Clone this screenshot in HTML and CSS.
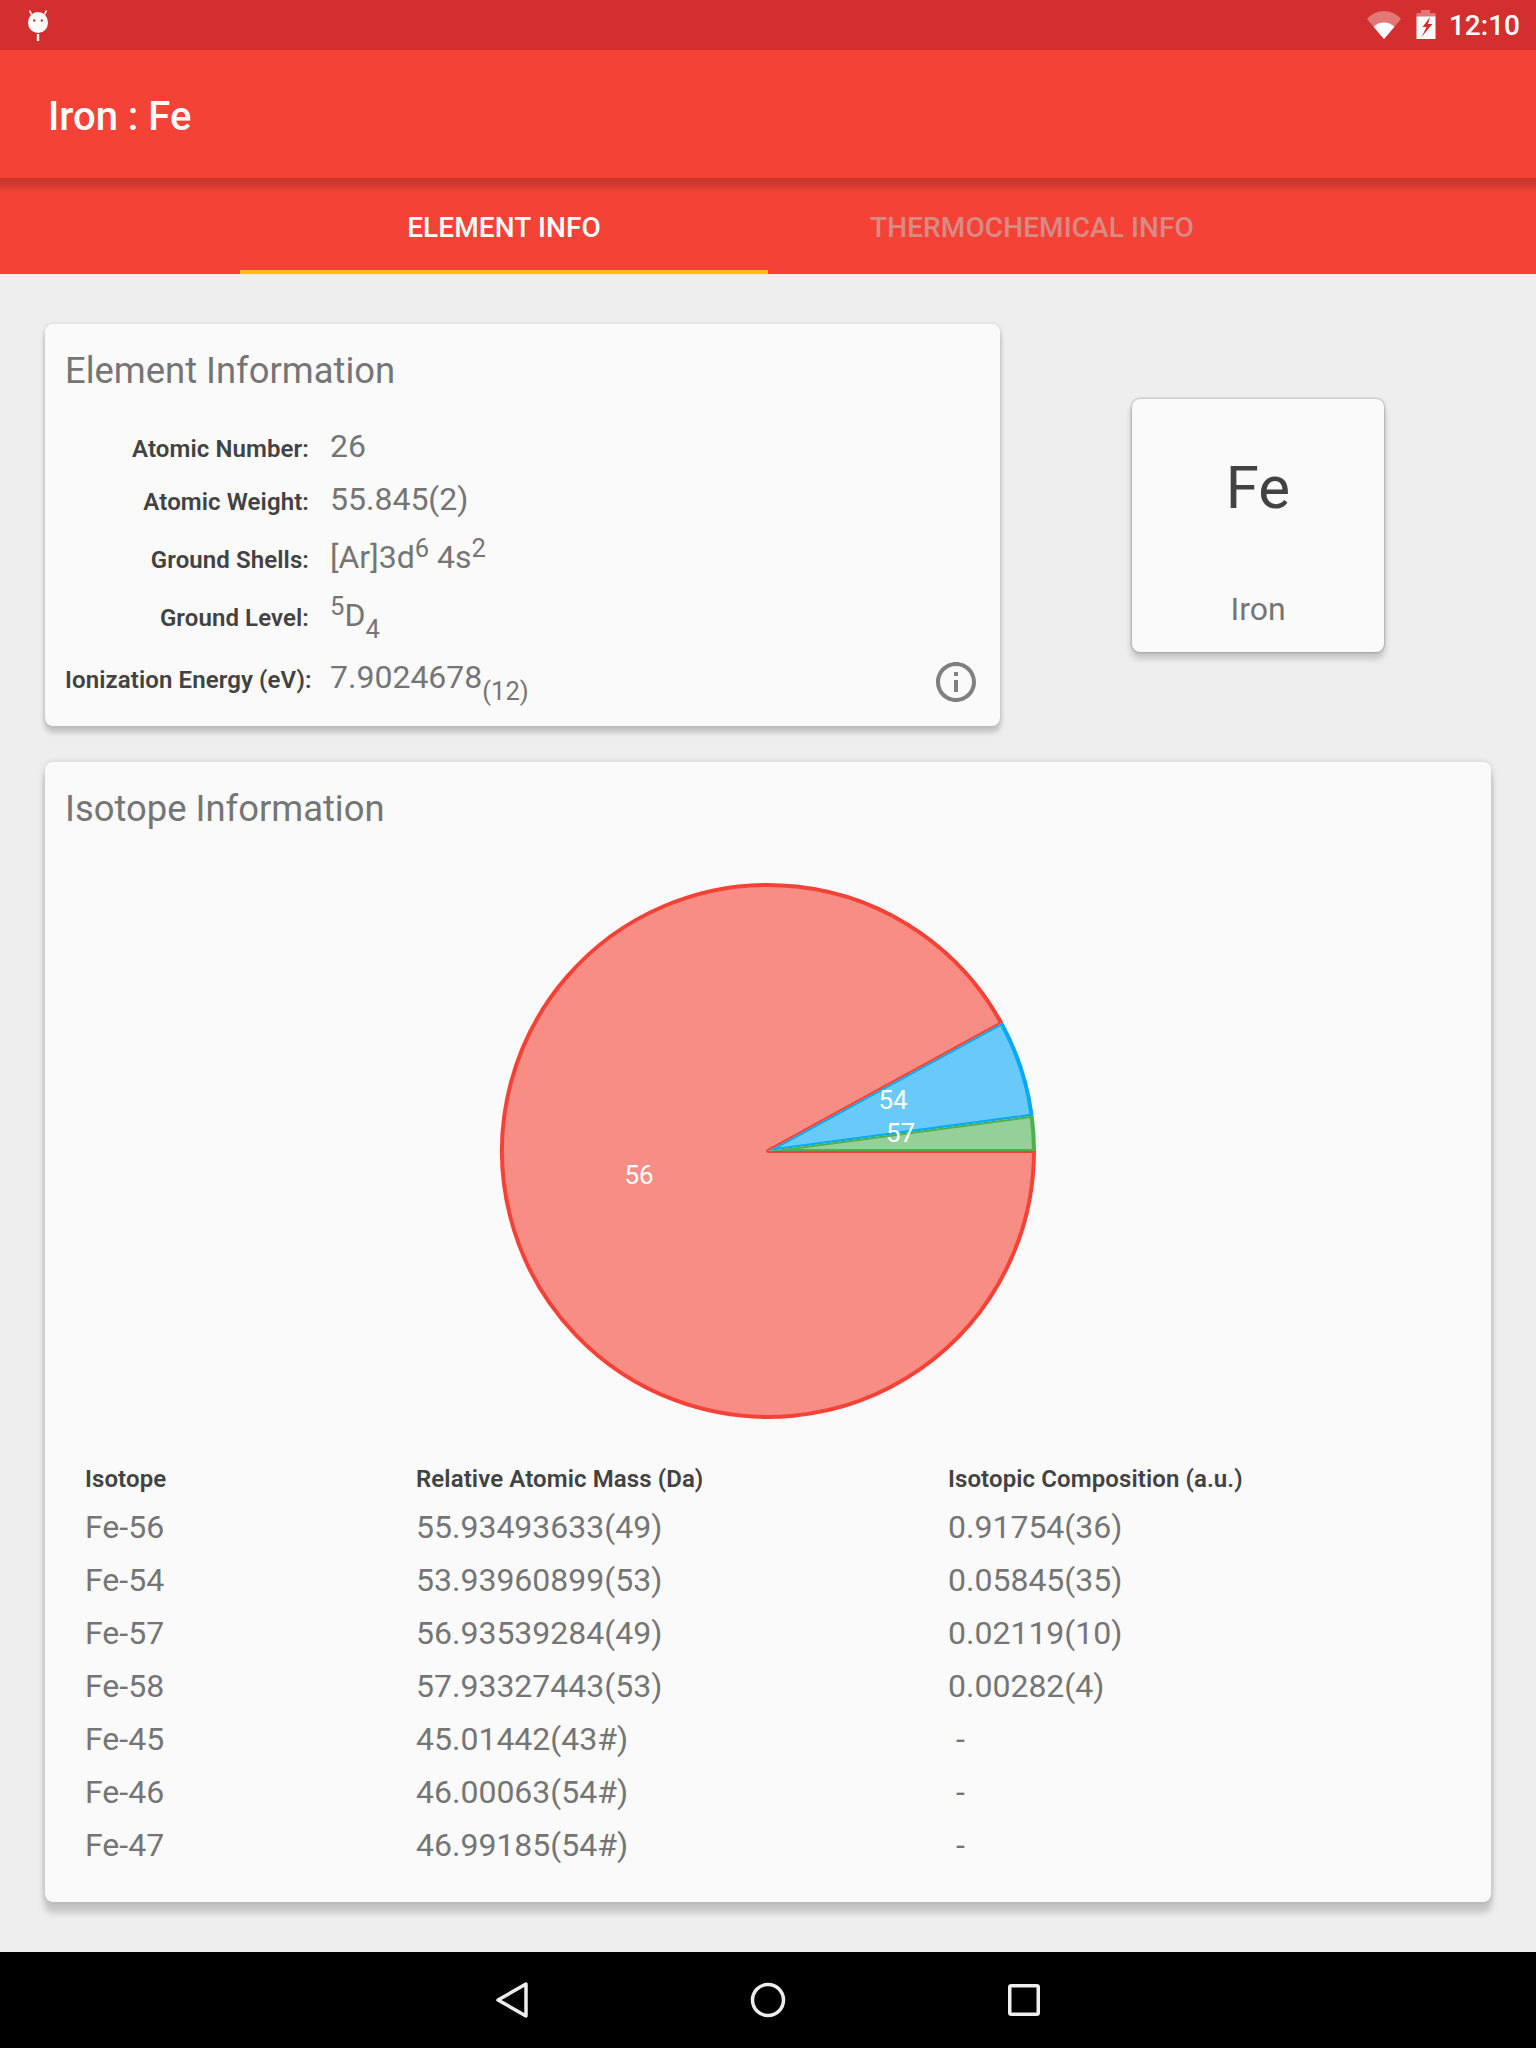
FILE: index.html
```html
<!DOCTYPE html>
<html lang="en">
<head>
<meta charset="utf-8">
<title>Iron : Fe</title>
<link rel="stylesheet" href="styles.css">
</head>
<body>
<div class="screen">
  <header class="status-bar">
    <svg class="debug-icon" width="20" height="31" viewBox="0 0 20 31">
      <ellipse cx="10" cy="12.5" rx="10" ry="10.5" fill="#fff"/>
      <path d="M3.5 4.5 1.5 .5M16.5 4.5 18.5 .5" stroke="#fff" stroke-width="1.6" fill="none"/>
      <circle cx="6.2" cy="10.5" r="1.2" fill="#d32f2f"/>
      <circle cx="13.8" cy="10.5" r="1.2" fill="#d32f2f"/>
      <rect x="8.8" y="24" width="2.4" height="7" fill="#fff"/>
    </svg>
    <div class="status-right">
      <svg width="34" height="28" viewBox="0 0 34 28">
        <path d="M17 28 0 8Q7 0 17 0T34 8Z" fill="#fff" fill-opacity=".35"/>
        <path d="M17 28 6.500 15.800Q11 11.500 17 11.500T27.500 15.800Z" fill="#fff"/>
      </svg>
      <svg width="20" height="29" viewBox="0 0 20 29">
        <path d="M5 0H14V3H19.500V7H.5V3H5Z" fill="#fff" fill-opacity=".35"/>
        <path d="M.5 6.500H19.500V29H.5Z" fill="#fff"/>
        <path d="M14 7 6.500 17H10.500L5.500 27 16.500 14H12Z" fill="#d32f2f"/>
      </svg>
      <span class="clock">12:10</span>
    </div>
  </header>

  <div class="toolbar"><h1 class="toolbar-title">Iron : Fe</h1></div>

  <nav class="tabs">
    <div class="tab tab-active">ELEMENT INFO</div>
    <div class="tab">THERMOCHEMICAL INFO</div>
  </nav>

  <main class="content">
    <div class="top-row">
      <section class="card info-card">
        <h2 class="card-title">Element Information</h2>
        <div class="info-rows">
          <div class="info-row"><span class="label">Atomic Number:</span><span class="value">26</span></div>
          <div class="info-row row-mid"><span class="label">Atomic Weight:</span><span class="value">55.845(2)</span></div>
          <div class="info-row row-mid"><span class="label">Ground Shells:</span><span class="value">[Ar]3d<sup>6</sup> 4s<sup>2</sup></span></div>
          <div class="info-row row-tall"><span class="label">Ground Level:</span><span class="value"><sup>5</sup>D<sub>4</sub></span></div>
          <div class="info-row"><span class="label">Ionization Energy (eV):</span><span class="value">7.9024678<sub>(12)</sub></span></div>
        </div>
        <svg class="info-icon" width="48" height="48" viewBox="0 0 24 24">
          <path fill="#808080" d="M11 7h2v2h-2zm0 4h2v6h-2zm1-9C6.480 2 2 6.480 2 12s4.480 10 10 10 10-4.480 10-10S17.520 2 12 2zm0 18c-4.410 0-8-3.590-8-8s3.590-8 8-8 8 3.590 8 8-3.590 8-8 8z"/>
        </svg>
      </section>
      <aside class="card element-tile">
        <div class="tile-symbol">Fe</div>
        <div class="tile-name">Iron</div>
      </aside>
    </div>

    <section class="card isotope-card">
      <h2 class="card-title">Isotope Information</h2>
      <svg class="pie" width="560" height="560" viewBox="0 0 560 560">
        <defs>
          <clipPath id="clip-blue"><polygon points="280,280 577.4,240.3 584,181 543.2,135.900"/></clipPath>
          <clipPath id="clip-green"><polygon points="280,280 600,280 577.4,240.3"/></clipPath>
          <clipPath id="clip-red"><polygon points="280,280 543.2,135.900 560,0 0,0 0,560 560,560 600,280"/></clipPath>
        </defs>
        <path clip-path="url(#clip-blue)" d="M280 280 543.660 244.820A266 266 0 0 0 513.330 152.250Z" fill="#69c9f9" stroke="#03a9f4" stroke-width="4" stroke-linejoin="round"/>
        <path clip-path="url(#clip-green)" d="M280 280H546A266 266 0 0 0 543.660 244.820Z" fill="#94d097" stroke="#4caf50" stroke-width="4" stroke-linejoin="round"/>
        <path clip-path="url(#clip-red)" d="M280 280 513.330 152.250A266 266 0 1 0 546 280Z" fill="#f78d84" stroke="#f44336" stroke-width="4" stroke-linejoin="round"/>
        <text class="pie-label" x="405" y="238" text-anchor="middle">54</text>
        <text class="pie-label" x="412.500" y="271" text-anchor="middle">57</text>
        <text class="pie-label" x="151" y="313" text-anchor="middle">56</text>
      </svg>
      <div class="isotope-table">
        <div class="th">Isotope</div><div class="th">Relative Atomic Mass (Da)</div><div class="th">Isotopic Composition (a.u.)</div>
        <div class="td">Fe-56</div><div class="td">55.93493633(49)</div><div class="td">0.91754(36)</div>
        <div class="td">Fe-54</div><div class="td">53.93960899(53)</div><div class="td">0.05845(35)</div>
        <div class="td">Fe-57</div><div class="td">56.93539284(49)</div><div class="td">0.02119(10)</div>
        <div class="td">Fe-58</div><div class="td">57.93327443(53)</div><div class="td">0.00282(4)</div>
        <div class="td">Fe-45</div><div class="td">45.01442(43#)</div><div class="td dash">-</div>
        <div class="td">Fe-46</div><div class="td">46.00063(54#)</div><div class="td dash">-</div>
        <div class="td">Fe-47</div><div class="td">46.99185(54#)</div><div class="td dash">-</div>
      </div>
    </section>
  </main>

  <footer class="nav-bar">
    <svg width="32" height="36" viewBox="0 0 32 36"><path d="M30 2V34L2 18Z" fill="none" stroke="#eee" stroke-width="3.500" stroke-linejoin="round"/></svg>
    <svg width="36" height="36" viewBox="0 0 36 36"><circle cx="18" cy="18" r="15.500" fill="none" stroke="#eee" stroke-width="3.500"/></svg>
    <svg width="32" height="32" viewBox="0 0 32 32"><rect x="1.750" y="1.750" width="28.500" height="28.500" rx="1.500" fill="none" stroke="#eee" stroke-width="3.500"/></svg>
  </footer>
</div>
</body>
</html>
```

FILE: styles.css
```css
* { box-sizing: border-box; }

html, body {
  margin: 0;
  padding: 0;
  background: #eee;
}

.screen {
  width: 1536px;
  height: 2048px;
  display: flex;
  flex-direction: column;
  overflow: hidden;
  font-family: Roboto, "Noto Sans", sans-serif;
}

.status-bar {
  height: 50px;
  flex: none;
  background: #d32f2f;
  display: flex;
  justify-content: space-between;
  align-items: flex-start;
  padding: 10px 16px 0 28px;
}

.status-right {
  display: flex;
  align-items: flex-start;
  gap: 15px;
  margin-top: 1px;
}

.status-right svg:nth-child(2) { margin-top: -1px; }

.clock {
  color: #fff;
  font-size: 28px;
  font-weight: 500;
  line-height: 33px;
  margin-top: -2px;
  margin-left: -2px;
}

.toolbar {
  height: 128px;
  flex: none;
  background: #f44336;
  display: flex;
  align-items: center;
  padding: 5px 0 0 48px;
  position: relative;
}

.toolbar::after {
  content: "";
  position: absolute;
  left: 0;
  right: 0;
  top: 100%;
  height: 14px;
  background: linear-gradient(to bottom, rgba(0,0,0,.2), rgba(0,0,0,.12) 55%, rgba(0,0,0,0));
  z-index: 2;
}

.toolbar-title {
  margin: 0;
  color: #fff;
  font-size: 40px;
  font-weight: 500;
  line-height: 47px;
}

.tabs {
  height: 96px;
  flex: none;
  background: #f44336;
  display: flex;
  padding: 0 240px;
}

.tab {
  flex: 1;
  display: flex;
  align-items: center;
  justify-content: center;
  font-size: 28px;
  font-weight: 500;
  letter-spacing: .1px;
  color: #da8a84;
  padding-top: 2px;
}

.tab-active {
  color: #fff;
  border-bottom: 4px solid #ffc107;
  padding-top: 6px;
}

.content {
  flex: 1;
  padding: 50px 45px 0;
  display: flex;
  flex-direction: column;
  gap: 36px;
}

.top-row {
  display: flex;
  align-items: center;
}

.card {
  background: #fafafa;
  border-radius: 8px;
  box-shadow: 0 6px 5px 1px rgba(0,0,0,.17), 0 0 4px rgba(0,0,0,.12);
}

.card-title {
  margin: 0;
  color: #757575;
  font-size: 36.400px;
  font-weight: 400;
  line-height: 42px;
  padding-top: 1px;
  height: 43px;
}

.info-card {
  width: 955px;
  height: 402px;
  flex: none;
  padding: 25px 20px 0;
  position: relative;
}

.info-rows { margin-top: 35px; }

.info-row {
  display: grid;
  grid-template-columns: 244px 1fr;
  column-gap: 21px;
  align-items: baseline;
  height: 53px;
}

.row-mid { height: 58px; }
.row-tall { height: 62px; }

.label {
  color: #424242;
  font-size: 24px;
  font-weight: 600;
  letter-spacing: .1px;
  line-height: 28px;
  text-align: right;
  white-space: nowrap;
}

.value {
  color: #757575;
  font-size: 32px;
  line-height: 38px;
  white-space: nowrap;
}

.value sup,
.value sub {
  font-size: 25.600px;
  line-height: 0;
}

.value sup { vertical-align: 11.500px; }
.value sub { vertical-align: -11.500px; }

.info-icon {
  position: absolute;
  right: 20px;
  bottom: 20px;
}

.element-tile {
  width: 252px;
  height: 253px;
  flex: none;
  margin-left: 132px;
  padding-top: 54px;
  display: flex;
  flex-direction: column;
  align-items: center;
  gap: 67px;
  box-shadow: 0 6px 6px 1px rgba(0,0,0,.17), 0 0 3px rgba(0,0,0,.4);
}

.tile-symbol {
  color: #424242;
  font-size: 60px;
  line-height: 70px;
}

.tile-name {
  color: #757575;
  font-size: 32px;
  line-height: 38px;
}

.isotope-card {
  height: 1140px;
  padding: 25px 20px 0;
  box-shadow: 0 10px 6px 1px rgba(0,0,0,.17), 0 0 6px rgba(0,0,0,.14);
}

.pie {
  display: block;
  margin: 41px auto 0;
}

.pie-label {
  fill: #fff;
  font-size: 26px;
}

.isotope-table {
  display: grid;
  grid-template-columns: 331px 532px 1fr;
  grid-template-rows: 43px;
  grid-auto-rows: 53px;
  margin: 34px 0 0 20px;
  align-items: baseline;
}

.th {
  color: #424242;
  font-size: 24px;
  font-weight: 600;
  letter-spacing: .1px;
  line-height: 28px;
}

.td {
  color: #757575;
  font-size: 32px;
  line-height: 38px;
}

.dash { padding-left: 8px; }

.nav-bar {
  height: 96px;
  flex: none;
  background: #000;
  display: grid;
  grid-template-columns: repeat(3, 256px);
  justify-content: center;
  justify-items: center;
  align-items: center;
}
```
